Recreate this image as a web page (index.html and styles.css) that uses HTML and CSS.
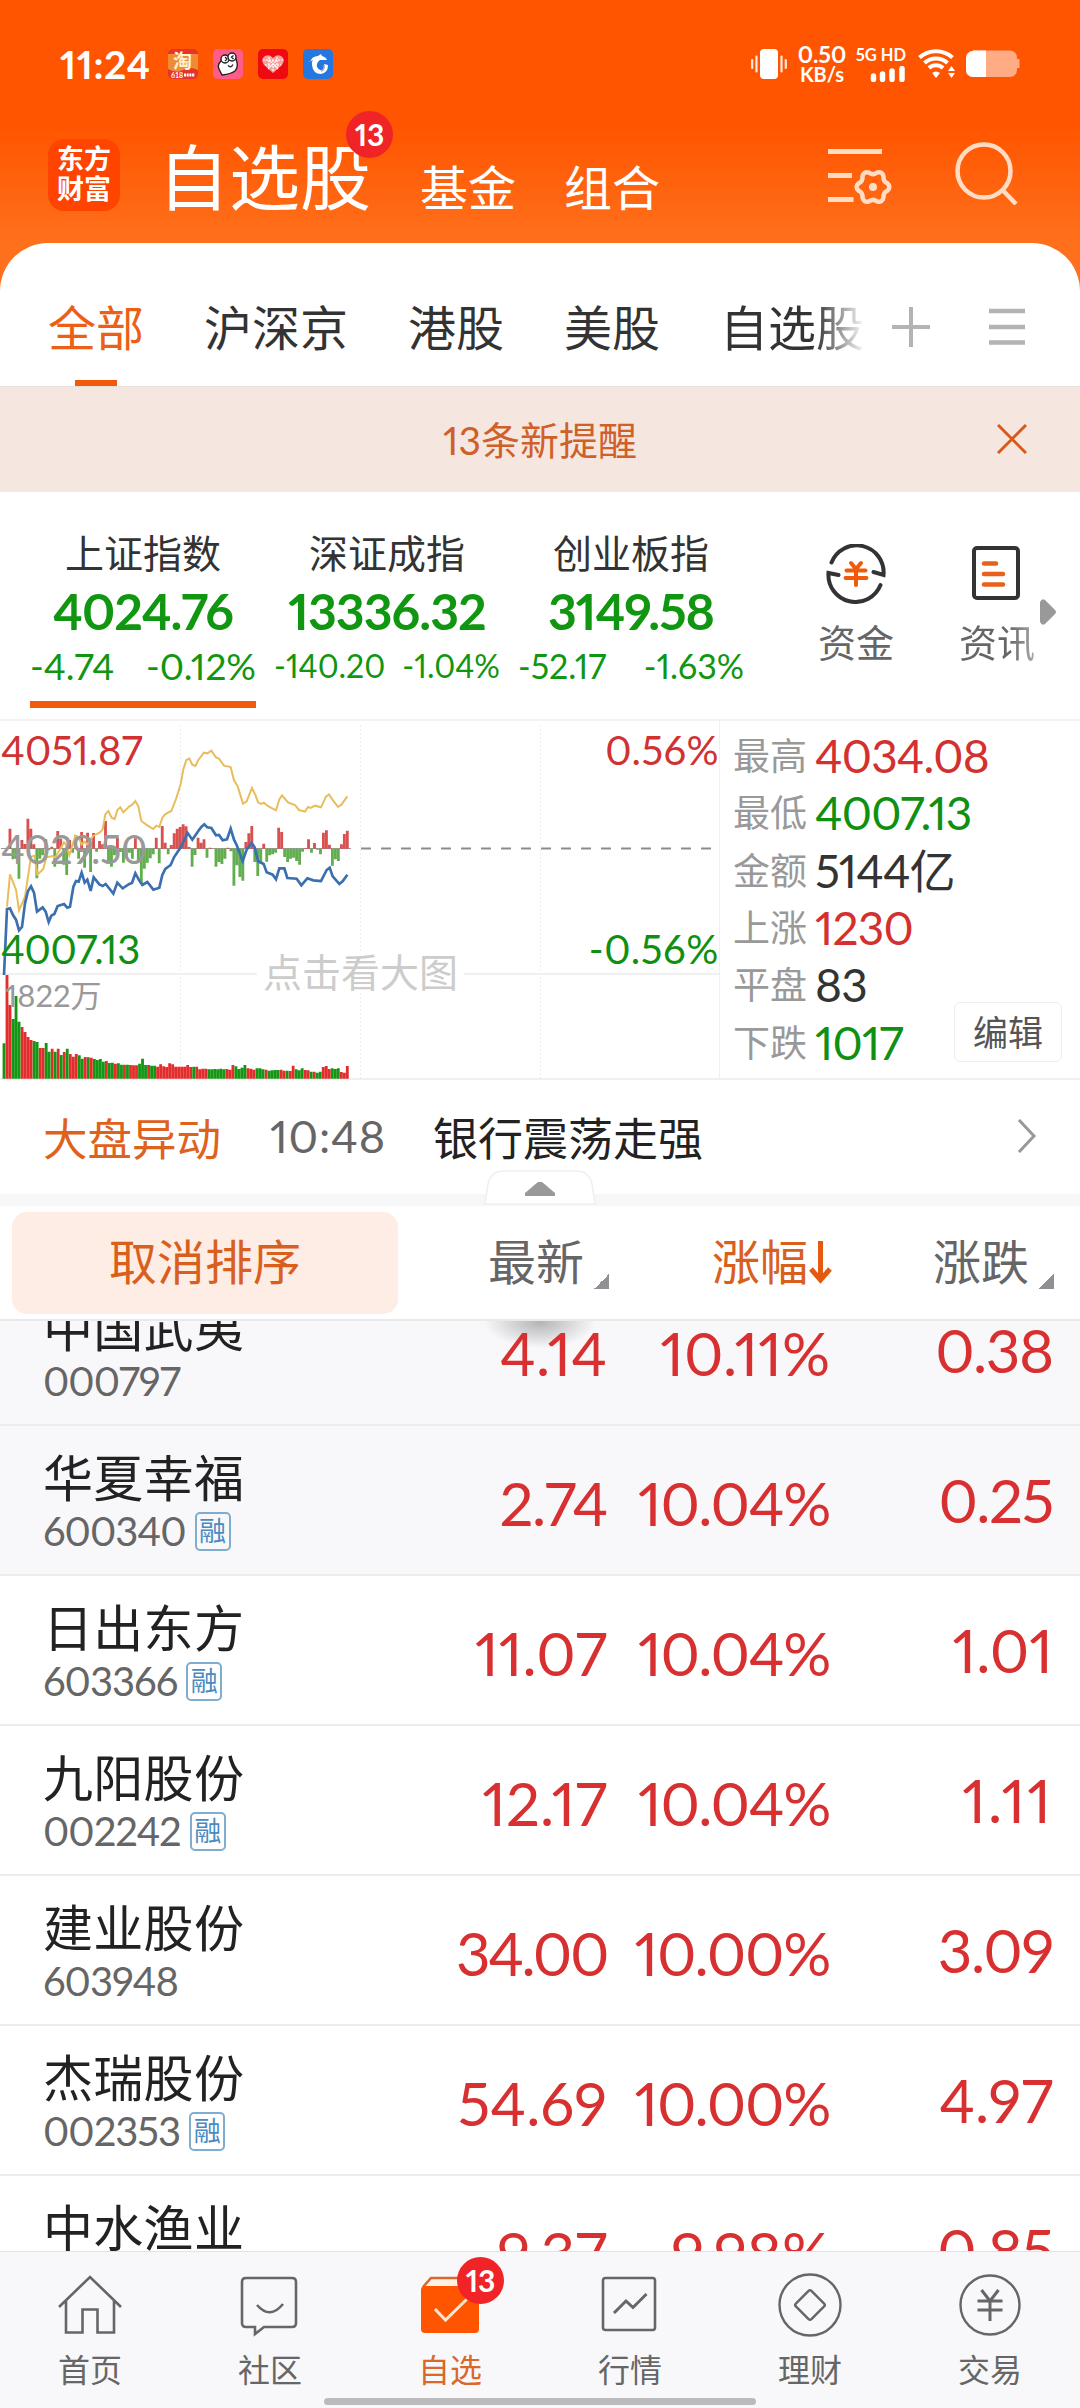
FILE: index.html
```html
<!DOCTYPE html>
<html lang="zh-CN">
	<head>
		<meta charset="utf-8">
		<title>自选股</title>
		<link rel="stylesheet" href="styles.css">
	</head>
	<body>
		<header class="top">
			<div class="status">
				<span class="clock">11:24</span>
				<div class="apps">
					<svg width="30" height="30" viewBox="0 0 30 30">
						<rect width="30" height="30" rx="5" fill="#e5342b"/>
						<path d="M0 5h30v16q-9-4-15 0t-15-1z" fill="#ef8a35"/>
						<text x="5" y="19" class="tao">淘</text>
						<text x="3" y="28.500" class="tiny">618</text>
						<path d="M16 26h11" stroke="#fff" stroke-width="3" stroke-dasharray="2 .7"/>
					</svg>
					<svg width="30" height="30" viewBox="0 0 30 30">
						<rect width="30" height="30" rx="5" fill="#ff5c8a"/>
						<path d="M8 12q-4 4-2 8l3 6q9-1 13-4 4-4 1-12z" fill="#fff" stroke="#222" stroke-width="1.400"/>
						<circle cx="12" cy="10" r="4" fill="#fff" stroke="#222" stroke-width="1.400"/>
						<circle cx="19" cy="8" r="4" fill="#fff" stroke="#222" stroke-width="1.400"/>
						<path d="M12 8l2 2-2 2M20.500 6.500l-2 1.500 2 2M15 16.500q3 3 5-1" fill="none" stroke="#222" stroke-width="1.300"/>
					</svg>
					<svg width="30" height="30" viewBox="0 0 30 30">
						<rect width="30" height="30" rx="5" fill="#ee0a10"/>
						<path d="M15 24L6 16q-4-6 1-9 5-2 8 2 3-4 8-2 5 3 1 9z" fill="#f7a09c"/>
						<path d="M5 11h20M7 16h16M11 8v12M19 8v12M15 11v12M10 20l9-9M20 20l-9-9" stroke="#fff" stroke-width="1.200" stroke-dasharray="2 1"/>
					</svg>
					<svg width="30" height="30" viewBox="0 0 30 30">
						<rect width="30" height="30" rx="5" fill="#2577e0"/>
						<path d="M7 13q2-6 8-6l3-2 1 2q4 1 5 4-4 0-7 0-4 3-3 7 2 4 5 3 3-2 2-6l4 1q0 8-7 9-8 0-9-9-1-3 1-5l-4 2z" fill="#fff"/>
						<path d="M18 22q4-1 3-6" fill="none" stroke="#aaa" stroke-width="1.500"/>
					</svg>
				</div>
				<div class="signals">
					<svg width="36" height="30" viewBox="0 0 36 30" class="vibrate">
						<rect x="9" width="18" height="30" rx="4" fill="#fff"/>
						<path d="M1.200 11v8M5.500 7.500v15M30.500 7.500v15M34.800 11v8" stroke="#ffe8dc" stroke-width="2.200" stroke-linecap="round"/>
					</svg>
					<div class="speed"><b>0.50</b><i>KB/s</i></div>
					<div class="cell">
						<span>5G HD</span>
						<svg width="36" height="16" viewBox="0 0 36 16"><path d="M3.500 10v3.500M12.500 8v5.500M22 5v8.500M32 2.500v11" stroke="#fff" stroke-width="5.500" stroke-linecap="round"/></svg>
					</div>
					<svg width="38" height="30" viewBox="0 0 38 30" class="wifi">
						<path d="M1.500 8.500a25 25 0 0 1 33 0M6.500 14a17 17 0 0 1 23 0M11 19a10.500 10.500 0 0 1 14 0" fill="none" stroke="#fff" stroke-width="4"/>
						<path d="M14 24q4-3 8 0l-4 5z" fill="#fff"/>
						<path d="M30 22l3.500-5 3.500 5zM30 24l3.500 5 3.500-5z" fill="#fff"/>
					</svg>
					<svg width="54" height="28" viewBox="0 0 54 28">
						<path d="M7 .500h37a7 7 0 0 1 7 7v1.500h2.500v9H51v2a7 7 0 0 1-7 7H7a7 7 0 0 1-7-7v-12a7 7 0 0 1 7-7z" fill="#ffab84"/>
						<path d="M7 .500h13v26.500H7a7 7 0 0 1-7-7v-12a7 7 0 0 1 7-7z" fill="#fff"/>
					</svg>
				</div>
			</div>
			<div class="nav">
				<div class="logo">东方<br>财富</div>
				<div class="nav-main">自选股<span class="badge">13</span></div>
				<div class="nav-item">基金</div>
				<div class="nav-item">组合</div>
				<svg width="64" height="60" viewBox="0 0 64 60" class="nav-set">
					<path d="M0 6.500h54M0 30.500h24M0 54.500h25.500" stroke="#ffdcc4" stroke-width="5"/>
					<path transform="translate(45 42)" d="M14.300 3.800Q10 5.750 10.500 10.500 9.250 16 3.800 14.300 0 11.500-3.800 14.300-9.250 16-10.500 10.500-10 5.750-14.300 3.800-18.500 0-14.300-3.800-10-5.750-10.500-10.500-9.250-16-3.800-14.300 0-11.500 3.800-14.300 9.250-16 10.500-10.500 10-5.750 14.300-3.800 18.500 0 14.300 3.800z" fill="none" stroke="#ffdcc4" stroke-width="4.500"/>
					<circle cx="45" cy="42" r="4" fill="#ffdcc4"/>
				</svg>
				<svg width="64" height="64" viewBox="0 0 64 64" class="nav-search">
					<ellipse cx="29" cy="30" rx="26.500" ry="26.500" fill="none" stroke="#ffdcc4" stroke-width="4.500"/>
					<path d="M47.500 49l13.500 14" stroke="#ffdcc4" stroke-width="4.500"/>
				</svg>
			</div>
		</header>

		<div class="tabs">
			<div class="tab tab-on">全部</div>
			<div class="tab">沪深京</div>
			<div class="tab">港股</div>
			<div class="tab">美股</div>
			<div class="tab tab-cut">自选股</div>
			<svg width="38" height="40" viewBox="0 0 38 40" class="tab-add"><path d="M0 20h38M19 0v40" stroke="#b3b3b3" stroke-width="4"/></svg>
			<svg width="36" height="38" viewBox="0 0 36 38" class="tab-menu"><path d="M0 3h36M0 19h36M0 34.500h36" stroke="#b3b3b3" stroke-width="4.500"/></svg>
		</div>

		<div class="notice">
			<span>13条新提醒</span>
			<svg width="30" height="30" viewBox="0 0 30 30" class="notice-close"><path d="M1 1l28 28M29 1L1 29" stroke="#d9591a" stroke-width="3"/></svg>
		</div>

		<div class="indices">
			<div class="index index-on">
				<div class="index-name">上证指数</div>
				<div class="index-value">4024.76</div>
				<div class="index-diff"><span>-4.74</span><span>-0.12%</span></div>
			</div>
			<div class="index index-b">
				<div class="index-name">深证成指</div>
				<div class="index-value">13336.32</div>
				<div class="index-diff"><span>-140.20</span><span>-1.04%</span></div>
			</div>
			<div class="index index-c">
				<div class="index-name">创业板指</div>
				<div class="index-value">3149.58</div>
				<div class="index-diff"><span>-52.17</span><span>-1.63%</span></div>
			</div>
			<div class="tool tool-fund">
				<svg width="60" height="60" viewBox="0 0 60 60">
					<path d="M5.500 18.500A27 27 0 0 1 57.500 31L47.500 28M54.500 41A27 27 0 0 1 2.500 29L12.500 31" fill="none" stroke="#333" stroke-width="4" stroke-linecap="round"/>
					<path d="M25 19l5 6 5-6M20.500 26.500h19M19.500 34h21M30 26v15" fill="none" stroke="#f05a0a" stroke-width="4" stroke-linecap="round"/>
				</svg>
				<span>资金</span>
			</div>
			<div class="tool tool-news">
				<svg width="60" height="60" viewBox="0 0 60 60">
					<rect x="7" y="4" width="44" height="50" rx="3" fill="none" stroke="#333" stroke-width="4"/>
					<path d="M17 19.500h12M17 30h19M17 40.500h19" stroke="#e8601c" stroke-width="4.500" stroke-linecap="round"/>
				</svg>
				<span>资讯</span>
			</div>
			<svg width="17" height="26" viewBox="0 0 17 26" class="more"><path d="M0 3Q2-1 5 1l10 10q2 2 0 4L5 25q-3 2-5-2z" fill="#999"/></svg>
		</div>

		<div class="market">
			<div class="chart">
				<svg width="720" height="359" viewBox="0 0 720 359">
					<path d="M180.500 4v355M360.500 4v355M540.500 4v355" stroke="#ececec" stroke-dasharray="2 2"/>
					<path d="M0 253h720" stroke="#f0f0f0" stroke-width="2"/>
					<path d="M361 127.500h352" stroke="#8c8c8c" stroke-width="2" stroke-dasharray="10 10"/>
					<path d="M1 127.500h350" stroke="#999" stroke-width="1"/>
					<g transform="translate(0 -6) scale(.33333)" fill="none">
						<path id="flow-up" stroke="#d95050" stroke-width="8.500"/>
						<path id="flow-down" stroke="#62ad4e" stroke-width="8.500"/>
						<path id="vol-up" stroke="#e32d2d" stroke-width="8.500"/>
						<path id="vol-down" stroke="#149614" stroke-width="8.500"/>
						<path d="M21 575L30 478L48 524L57 586L75 545L93 425L103 422L112 478L124 468L130 461L139 427L157 423L165 428L183 398L192 382L199 390L208 421L226 362L235 366L245 388L254 380L262 388L280 362L300 352L308 343L316 298L325 288L335 308L344 312L352 285L361 277L370 292L388 274L396 270L406 258L415 274L424 318L442 331L460 342L469 332L478 336L487 308L496 297L514 288L528 252L542 207L550 163L559 135L568 131L577 149L586 153L595 135L612 113L622 115L634 107L648 127L657 131L672 152L692 156L702 196L713 214L729 266L740 259L756 219L767 242L774 262L783 267L792 263L803 273L828 286L838 253L846 241L864 262L885 270L897 285L915 290L924 276L932 279L945 272L963 277L978 245L987 238L999 256L1014 276L1024 269L1042 244" stroke="#e8bd5c" stroke-width="6"/>
						<path d="M12 780L21 582L30 580L39 600L48 614L57 646L66 636L75 565L84 528L93 514L102 533L111 590L128 577L137 590L146 621L154 602L163 597L173 573L192 567L202 578L210 575L220 516L228 498L236 500L245 473L254 503L262 494L272 528L281 487L298 508L308 513L317 507L340 536L352 503L368 520L388 507L396 504L406 475L418 497L427 510L442 501L460 524L478 518L487 480L496 462L512 450L522 427L542 397L563 354L577 374L595 348L604 336L613 328L622 337L634 339L648 361L657 360L668 376L681 373L692 341L702 374L710 390L728 439L740 404L755 384L764 397L774 438L791 447L800 472L818 479L828 493L838 460L853 460L862 489L890 491L904 511L922 490L940 496L963 498L980 465L989 458L998 484L1018 507L1028 499L1042 479" stroke="#3b70b0" stroke-width="8"/>
					</g>
				</svg>
				<span class="mark mark-high">4051.87</span>
				<span class="mark mark-mid">4029.50</span>
				<span class="mark mark-low">4007.13</span>
				<span class="mark mark-up">0.56%</span>
				<span class="mark mark-down">-0.56%</span>
				<span class="mark mark-vol">1822万</span>
				<span class="mark mark-tip">点击看大图</span>
			</div>
			<div class="stats">
				<div class="stat"><span>最高</span><b class="red">4034.08</b></div>
				<div class="stat"><span>最低</span><b class="green">4007.13</b></div>
				<div class="stat"><span>金额</span><b>5144亿</b></div>
				<div class="stat"><span>上涨</span><b class="red">1230</b></div>
				<div class="stat"><span>平盘</span><b>83</b></div>
				<div class="stat"><span>下跌</span><b class="green">1017</b></div>
				<div class="edit">编辑</div>
			</div>
		</div>

		<div class="flash">
			<span class="flash-tag">大盘异动</span>
			<span class="flash-time">10:48</span>
			<span class="flash-text">银行震荡走强</span>
			<svg width="20" height="34" viewBox="0 0 20 34" class="flash-go"><path d="M2 1l15 16L2 33" fill="none" stroke="#999" stroke-width="3"/></svg>
		</div>
		<div class="strip">
			<svg width="112" height="36" viewBox="0 0 112 36" class="handle">
				<path d="M1 34L4 14Q7 1 20 1H92q13 0 16 13l3 20z" fill="#fff" stroke="#efefef" stroke-width="1.500"/>
				<path d="M54 12h4l13 11v3H41v-3z" fill="#999"/>
			</svg>
		</div>

		<div class="sort">
			<div class="sort-cancel">取消排序</div>
			<div class="sort-col">最新<i class="corner"></i></div>
			<div class="sort-col sort-on">涨幅<svg width="23" height="44" viewBox="0 0 23 44" class="arrow"><path d="M11.500 1v38M2 29l9.500 11L21 29" fill="none" stroke="#e35a10" stroke-width="5"/></svg></div>
			<div class="sort-col">涨跌<i class="corner"></i></div>
		</div>

		<div class="list">
			<div class="row dim">
				<div class="stock"><div class="name">中国武夷</div><div class="code">000797</div></div>
				<div class="num">4.14</div><div class="num">10.11%</div><div class="num num-last tight">0.38</div>
			</div>
			<div class="row dim">
				<div class="stock"><div class="name">华夏幸福</div><div class="code">600340<i class="rong">融</i></div></div>
				<div class="num tight">2.74</div><div class="num tight">10.04%</div><div class="num num-last tight">0.25</div>
			</div>
			<div class="row">
				<div class="stock"><div class="name">日出东方</div><div class="code">603366<i class="rong">融</i></div></div>
				<div class="num">11.07</div><div class="num tight">10.04%</div><div class="num num-last">1.01</div>
			</div>
			<div class="row">
				<div class="stock"><div class="name">九阳股份</div><div class="code">002242<i class="rong">融</i></div></div>
				<div class="num">12.17</div><div class="num tight">10.04%</div><div class="num num-last loose">1.11</div>
			</div>
			<div class="row">
				<div class="stock"><div class="name">建业股份</div><div class="code">603948</div></div>
				<div class="num tighter">34.00</div><div class="num tight">10.00%</div><div class="num num-last tight">3.09</div>
			</div>
			<div class="row">
				<div class="stock"><div class="name">杰瑞股份</div><div class="code">002353<i class="rong">融</i></div></div>
				<div class="num">54.69</div><div class="num tight">10.00%</div><div class="num num-last">4.97</div>
			</div>
			<div class="row">
				<div class="stock"><div class="name">中水渔业</div><div class="code">000798</div></div>
				<div class="num">9.37</div><div class="num">9.98%</div><div class="num num-last tight">0.85</div>
			</div>
		</div>

		<footer class="bar">
			<div class="bar-item">
				<svg width="66" height="66" viewBox="0 0 66 66"><path d="M2 35L33 5l31 30M9 29v31.500h16.500v-23h15v23H57V29" fill="none" stroke="#666" stroke-width="2.600"/></svg>
				首页
			</div>
			<div class="bar-item">
				<svg width="66" height="66" viewBox="0 0 66 66"><path d="M9 6h46q4 0 4 4v41q0 4-4 4H27l-9 7v-7H9q-4 0-4-4V10q0-4 4-4zM20 33q13 15 26-1" fill="none" stroke="#666" stroke-width="2.600"/></svg>
				社区
			</div>
			<div class="bar-item bar-on">
				<svg width="66" height="66" viewBox="0 0 66 66"><path d="M6 15L14 6h38l8 9" fill="#fff0e4" stroke="#d9682c" stroke-width="2.600"/><rect x="4" y="14" width="58" height="47" rx="4" fill="#ff5500"/><path d="M18 37l10.500 11L50 27" fill="none" stroke="#ffe6cf" stroke-width="3"/></svg>
				自选
				<span class="badge">13</span>
			</div>
			<div class="bar-item">
				<svg width="66" height="66" viewBox="0 0 66 66"><rect x="6" y="6" width="52" height="52" rx="2.500" fill="none" stroke="#666" stroke-width="2.600"/><path d="M17 41l12-12 7 6.500 13.500-13.500" fill="none" stroke="#666" stroke-width="3"/></svg>
				行情
			</div>
			<div class="bar-item">
				<svg width="66" height="66" viewBox="0 0 66 66"><circle cx="33" cy="33" r="30.500" fill="none" stroke="#666" stroke-width="2.400"/><rect x="22" y="22" width="22" height="22" rx="2" transform="rotate(45 33 33)" fill="none" stroke="#666" stroke-width="2.400"/></svg>
				理财
			</div>
			<div class="bar-item">
				<svg width="66" height="66" viewBox="0 0 66 66"><circle cx="33" cy="33" r="29.500" fill="none" stroke="#666" stroke-width="2.400"/><path d="M24.500 18l8.500 11 8.500-11M20.500 29h25M20.500 38h25M33 29v20" fill="none" stroke="#666" stroke-width="3"/></svg>
				交易
			</div>
			<div class="home-line"></div>
		</footer>
		<script src="chart.js"></script>
	</body>
</html>
```

FILE: styles.css
```css
body {
	margin: 0;
	width: 1080px;
	height: 2408px;
	overflow: hidden;
	display: flex;
	flex-direction: column;
	background: #fff;
	color: #333;
	font-family: Lato, "Noto Sans CJK SC", sans-serif;
	font-variant-numeric: proportional-nums;
}
body > div, header, footer {
	flex: none;
	box-sizing: border-box;
}
svg {
	display: block;
	flex: none;
}
i {
	font-style: normal;
}
.red {
	color: #d43030;
}
.green {
	color: #109010;
}

/* header */
.top {
	height: 291px;
	margin-bottom: -48px;
	background: linear-gradient(#ff5500 125px, #ff701c 243px);
	color: #fff;
}
.status {
	height: 128px;
	box-sizing: border-box;
	padding: 0 60px 0 60px;
	display: flex;
	align-items: center;
}
.clock {
	width: 108px;
	font-size: 39px;
	font-weight: bold;
	letter-spacing: .6px;
	white-space: nowrap;
}
.apps {
	display: flex;
	gap: 15px;
}
.tao {
	font: bold 19px "Noto Sans CJK SC", sans-serif;
	fill: #fff2cf;
}
.tiny {
	font: bold 7px Lato, sans-serif;
	fill: #fff;
}
.signals {
	display: flex;
	align-items: center;
	margin-left: auto;
}
.vibrate {
	margin-right: 10px;
}
.speed {
	width: 50px;
	display: flex;
	flex-direction: column;
	align-items: center;
	line-height: 20px;
}
.speed b {
	font-size: 23px;
}
.speed i {
	font-size: 20px;
	font-weight: bold;
}
.cell {
	margin-left: 10px;
	width: 49px;
	display: flex;
	flex-direction: column;
	align-items: flex-end;
	gap: 2px;
	font-size: 16.500px;
	font-weight: bold;
	line-height: 18px;
	white-space: nowrap;
}
.wifi {
	margin: 0 10px 0 12px;
}
.nav {
	height: 115px;
	display: flex;
	padding-left: 48px;
}
.logo {
	width: 72px;
	height: 72px;
	margin: 11px 38px 0 0;
	box-sizing: border-box;
	padding-top: 5px;
	border-radius: 16px;
	background: #ff4400;
	font-size: 27px;
	font-weight: bold;
	line-height: 30px;
	text-align: center;
}
.nav-main {
	position: relative;
	margin-right: 49px;
	font-size: 71px;
	line-height: 98px;
}
.badge {
	position: absolute;
	right: -22px;
	top: -17px;
	width: 47px;
	height: 47px;
	border-radius: 50%;
	background: #f02427;
	color: #fff;
	font-size: 30px;
	font-weight: bold;
	line-height: 47px;
	text-align: center;
}
.nav-item {
	margin-right: 48px;
	font-size: 48px;
	line-height: 119px;
}
.nav-set {
	margin: 17px 0 0 120px;
}
.nav-search {
	margin: 13px 0 0 63px;
}

/* group tabs */
.tabs {
	height: 144px;
	padding-left: 48px;
	display: flex;
	gap: 60px;
	border-bottom: 1px solid #e6e0dc;
	border-radius: 48px 48px 0 0;
	background: #fff;
	font-size: 48px;
	line-height: 170px;
}
.tab-on {
	color: #ec5f14;
	height: 143px;
	background: linear-gradient(#f05a0a, #f05a0a) center bottom / 42px 6px no-repeat;
}
.tab-cut {
	width: 144px;
	background: linear-gradient(90deg, #333 95px, rgba(51, 51, 51, .1) 140px);
	-webkit-background-clip: text;
	background-clip: text;
	color: transparent;
}
.tab-add {
	margin: 64px 0 0 -32px;
}
.tab-menu {
	margin: 65px 0 0 -1px;
}

.notice {
	height: 105px;
	display: grid;
	grid-template-columns: 997px 1fr;
	align-items: center;
	background: #f5e7df;
	color: #d0602a;
	font-size: 39px;
}
.notice span {
	text-align: center;
	padding: 0 0 4px 83px;
}
.notice-close {
	margin-bottom: 2px;
}

/* indices */
.indices {
	height: 229px;
	display: flex;
	border-bottom: 2px solid #f2f2f2;
}
.index {
	width: 226px;
	height: 216px;
	margin-left: 18px;
	box-sizing: border-box;
	padding-top: 41px;
	color: #109610;
	text-align: center;
	white-space: nowrap;
}
.index-on {
	margin-left: 30px;
	background: linear-gradient(#f05a0a, #f05a0a) bottom / 100% 7px no-repeat;
}
.index-name {
	color: #333;
	font-size: 39px;
	line-height: 40px;
}
.index-value {
	font-size: 50px;
	font-weight: bold;
	line-height: 77px;
	letter-spacing: -1px;
}
.index-diff {
	display: flex;
	justify-content: space-between;
	font-size: 37px;
	line-height: 32px;
}
.index-b .index-diff {
	font-size: 32px;
}
.index-c .index-diff {
	font-size: 34px;
}
.tool {
	width: 76px;
	margin-top: 52px;
	display: flex;
	flex-direction: column;
	align-items: center;
	color: #666;
	font-size: 38px;
	line-height: 76px;
}
.tool-fund {
	margin-left: 74px;
}
.tool-news {
	margin-left: 65px;
}
.tool-news span {
	background: linear-gradient(90deg, #666 50px, #aaa);
	-webkit-background-clip: text;
	background-clip: text;
	color: transparent;
}
.more {
	margin: 107px 0 0 5px;
}

/* chart and market numbers */
.market {
	height: 359px;
	display: flex;
	border-bottom: 2px solid #f0f0f0;
}
.chart {
	position: relative;
	width: 719px;
	border-right: 1px solid #f0f0f0;
}
.mark {
	position: absolute;
	font-size: 40px;
	line-height: 40px;
	white-space: nowrap;
}
.mark-high {
	left: 1px;
	top: 9px;
	color: #d03232;
}
.mark-mid {
	left: 1px;
	top: 108px;
	color: #999;
	letter-spacing: -.6px;
}
.mark-low {
	left: 1px;
	top: 208px;
	color: #109010;
	letter-spacing: -.3px;
}
.mark-up {
	right: 0;
	top: 9px;
	color: #d03232;
	letter-spacing: .4px;
}
.mark-down {
	right: 0;
	top: 208px;
	color: #109010;
	letter-spacing: .6px;
}
.mark-vol {
	left: 5px;
	top: 254px;
	color: #999;
	font-size: 31px;
}
.mark-tip {
	left: 257px;
	top: 231px;
	padding: 0 6px;
	background: #fff;
	color: #ccc;
	font-size: 39px;
}
.stats {
	position: relative;
	padding: 6px 0 0 13px;
}
.stat {
	height: 57.300px;
	display: flex;
	align-items: center;
	gap: 8px;
	line-height: 57px;
}
.stat span {
	color: #999;
	font-size: 37px;
}
.stat b {
	font-size: 46px;
	font-weight: normal;
	letter-spacing: -.8px;
}
.edit {
	position: absolute;
	left: 234px;
	top: 281px;
	width: 106px;
	height: 58px;
	border: 1px solid #eee;
	border-radius: 6px;
	background: #fff;
	color: #555;
	font-size: 35px;
	line-height: 58px;
	text-align: center;
}

.flash {
	height: 114px;
	padding: 0 43px 2px;
	display: flex;
	align-items: center;
	font-size: 45px;
}
.flash-tag {
	width: 180px;
	color: #de621c;
	font-size: 44.500px;
}
.flash-time {
	width: 163px;
	padding-left: 47px;
	color: #666;
	letter-spacing: .8px;
}
.flash-text {
	color: #222;
}
.flash-go {
	margin-left: auto;
}
.strip {
	position: relative;
	height: 12px;
	background: #f6f7f9;
}
.handle {
	position: absolute;
	left: 484px;
	top: -24px;
}

/* table */
.sort {
	height: 115px;
	padding: 6px 0 0 12px;
	display: flex;
	border-bottom: 2px solid #e9e9ec;
	color: #666;
	font-size: 48px;
	line-height: 100px;
}
.sort-cancel {
	width: 386px;
	height: 102px;
	border-radius: 15px;
	background: #feede4;
	color: #d9601c;
	text-align: center;
}
.sort-col {
	width: 211px;
	display: flex;
	justify-content: flex-end;
}
.sort-col:last-child {
	width: 222px;
}
.sort-on {
	width: 223px;
	color: #d9601c;
}
.corner {
	width: 15px;
	height: 15px;
	margin: 62px 0 0 10px;
	background: linear-gradient(135deg, transparent 50%, #909094 50%);
}
.arrow {
	margin: 28px 0 0 1px;
}
.list {
	height: 930px;
	display: flex;
	flex-direction: column;
	justify-content: flex-end;
	overflow: hidden;
}
.row {
	flex: none;
	height: 150px;
	box-sizing: border-box;
	padding-left: 43px;
	display: flex;
	border-bottom: 2px solid #ececee;
	background: #fff;
}
.row:first-child {
	background: radial-gradient(ellipse 56px 26px at 540px 46px, #b4b4b6, #f8f8fa);
}
.row:last-child {
	margin-bottom: -75px;
}
.dim {
	background: #f8f8fa;
}
.stock {
	width: 344px;
}
.name {
	padding-top: 26px;
	color: #222;
	font-size: 50px;
	line-height: 52px;
	letter-spacing: .3px;
}
.code {
	display: flex;
	align-items: center;
	gap: 9px;
	color: #666;
	font-size: 40px;
	line-height: 54px;
	letter-spacing: -1px;
}
.rong {
	width: 32px;
	height: 35px;
	border: 2px solid #7fadd0;
	border-radius: 5px;
	color: #4a8ac0;
	font-size: 27px;
	line-height: 34px;
	letter-spacing: 0;
	text-align: center;
}
.num {
	width: 220px;
	color: #d83030;
	font-size: 60px;
	line-height: 155px;
	text-align: right;
}
.num + .num {
	width: 223px;
}
.num-last {
	line-height: 149px;
}
.tight {
	letter-spacing: -1.300px;
}
.tighter {
	letter-spacing: -2.400px;
}
.loose {
	letter-spacing: 2px;
}

/* bottom bar */
.bar {
	position: relative;
	height: 157px;
	display: grid;
	grid-template-columns: repeat(6, 180px);
	border-top: 1px solid #e2e2e4;
	background: #f8f8fa;
}
.bar-item {
	position: relative;
	padding-top: 20px;
	display: flex;
	flex-direction: column;
	align-items: center;
	color: #666;
	font-size: 32px;
	line-height: 63px;
}
.bar-on {
	color: #d9682c;
}
.bar .badge {
	right: 36px;
	top: 5px;
}
.home-line {
	position: absolute;
	left: 324px;
	top: 146px;
	width: 432px;
	height: 7px;
	border-radius: 4px;
	background: #bbb;
}
```

FILE: chart.js
```js
// net inflow per minute, above or below the middle line
var flow = [0,0,60,-32,-30,-90,26,14,90,60,13,-89,-30,-20,28,-5,6,-54,53,30,-48,-79,26,-12,41,-30,50,-57,48,-70,47,-9,23,13,83,-38,-54,-20,33,-10,-42,-25,-12,-30,31,-40,-104,-60,-42,-29,-17,33,-44,68,18,-17,11,46,60,65,73,67,5,-54,-19,33,18,28,-27,3,0,-54,-40,-46,-30,3,-8,-111,-50,-85,-96,20,46,68,-40,-82,-45,15,-39,-20,-17,-12,63,50,-25,-40,-30,-27,-37,-48,-9,2,28,-12,17,-3,-17,48,55,12,-51,-32,-37,13,44,54];
// volume per minute, negative when the price fell
var volume = [-106,311,221,-179,-248,-171,155,140,125,116,-113,-110,92,92,-107,-81,90,-81,90,-71,80,-90,74,66,74,-70,-60,65,-64,63,-59,-56,-59,-51,53,-47,-48,45,-46,-42,42,-42,41,40,40,-45,-60,-41,41,-39,-39,36,43,37,35,46,43,36,36,36,36,41,35,-36,36,28,30,30,-28,-28,-29,-28,-30,-28,29,27,41,-37,-29,-33,-41,31,30,27,-31,-31,-28,27,-24,-25,-26,-26,27,24,-24,23,39,-28,-25,-31,26,25,-21,21,-18,-21,35,38,29,-31,-29,-31,20,18,38];

function bars(data, base, sign, up, down) {
	var a = '', b = '', step = 1030 / (data.length - 1);
	for (var i = 0; i < data.length; i++) {
		var start = 'M' + (12 + i * step).toFixed(1) + ' ' + base + 'v';
		if (data[i] > 0) {
			a += start + -data[i];
		} else {
			b += start + data[i] * sign;
		}
	}
	document.getElementById(up).setAttribute('d', a);
	document.getElementById(down).setAttribute('d', b);
}
bars(flow, 401, -1, 'flow-up', 'flow-down');
bars(volume, 1091, 1, 'vol-up', 'vol-down');
```
